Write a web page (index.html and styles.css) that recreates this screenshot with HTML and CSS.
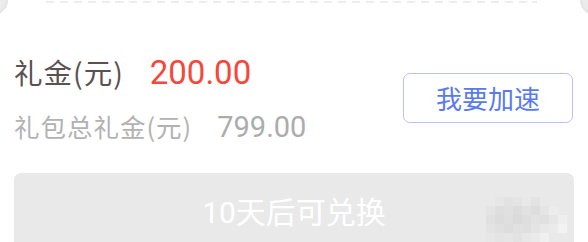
FILE: index.html
```html
<!DOCTYPE html>
<html lang="zh-CN">
<head>
<meta charset="utf-8">
<link rel="stylesheet" href="styles.css">
</head>
<body>
<div class="card">
  <span class="notch notch-left"></span>
  <span class="notch notch-right"></span>
  <div class="dash"></div>
  <div class="info">
    <div class="amounts">
      <div class="row row-main">
        <span class="label">礼金(元)</span>
        <span class="value">200.00</span>
      </div>
      <div class="row row-sub">
        <span class="label">礼包总礼金(元)</span>
        <span class="value">799.00</span>
      </div>
    </div>
    <button class="speed">我要加速</button>
  </div>
  <div class="exchange">10天后可兑换</div>
  <div class="mosaic">
    <i style="left:9px;top:0;background:#e6e6e6"></i>
    <i style="left:18px;top:0;background:#e2e2e2"></i>
    <i style="left:27px;top:0;background:#e4e4e4"></i>
    <i style="left:36px;top:0;background:#e8e8e8"></i>
    <i style="left:45px;top:0;background:#e3e3e3"></i>
    <i style="left:54px;top:0;background:#e9e9e9"></i>
    <i style="left:0;top:9px;background:#e4e4e4"></i>
    <i style="left:9px;top:9px;background:#dedede"></i>
    <i style="left:18px;top:9px;background:#e0e0e0"></i>
    <i style="left:27px;top:9px;background:#dcdcdc"></i>
    <i style="left:36px;top:9px;background:#e1e1e1"></i>
    <i style="left:45px;top:9px;background:#dddddd"></i>
    <i style="left:54px;top:9px;background:#e5e5e5"></i>
    <i style="left:63px;top:9px;background:#ececec"></i>
    <i style="left:0;top:18px;background:#e0e0e0"></i>
    <i style="left:9px;top:18px;background:#dcdcdc"></i>
    <i style="left:18px;top:18px;background:#dfdfdf"></i>
    <i style="left:27px;top:18px;background:#dadada"></i>
    <i style="left:36px;top:18px;background:#dedede"></i>
    <i style="left:45px;top:18px;background:#e2e2e2"></i>
    <i style="left:54px;top:18px;background:#e0e0e0"></i>
    <i style="left:63px;top:18px;background:#e6e6e6"></i>
    <i style="left:72px;top:18px;background:#eeeeee"></i>
    <i style="left:0;top:27px;background:#e3e3e3"></i>
    <i style="left:9px;top:27px;background:#e0e0e0"></i>
    <i style="left:18px;top:27px;background:#dddddd"></i>
    <i style="left:27px;top:27px;background:#e1e1e1"></i>
    <i style="left:36px;top:27px;background:#dfdfdf"></i>
    <i style="left:45px;top:27px;background:#e4e4e4"></i>
    <i style="left:54px;top:27px;background:#e8e8e8"></i>
    <i style="left:63px;top:27px;background:#ebebeb"></i>
    <i style="left:72px;top:27px;background:#f2f2f2"></i>
    <i style="left:0;top:36px;background:#e7e7e7"></i>
    <i style="left:9px;top:36px;background:#e4e4e4"></i>
    <i style="left:18px;top:36px;background:#e6e6e6"></i>
    <i style="left:27px;top:36px;background:#e2e2e2"></i>
    <i style="left:36px;top:36px;background:#e7e7e7"></i>
    <i style="left:45px;top:36px;background:#eaeaea"></i>
    <i style="left:54px;top:36px;background:#f0f0f0"></i>
  </div>
</div>
</body>
</html>
```

FILE: styles.css
```css
html, body {
  margin: 0;
  padding: 0;
  background: #ffffff;
}

.card {
  position: relative;
  width: 588px;
  height: 242px;
  overflow: hidden;
  font-family: Roboto, "Noto Sans CJK SC", sans-serif;
}

.notch {
  position: absolute;
  width: 30px;
  height: 30px;
  border-radius: 50%;
  background: #ececec;
  box-shadow: inset 0 0 4px rgba(0, 0, 0, 0.08);
}

.notch-left {
  left: -22px;
  top: -15px;
}

.notch-right {
  right: -22px;
  top: -15px;
}

.dash {
  height: 2px;
  margin: 1px 51px 0 46px;
  background: repeating-linear-gradient(90deg, #ededed 0, #ededed 8px, transparent 8px, transparent 13.9px);
}

.info {
  display: flex;
  align-items: flex-start;
  justify-content: space-between;
  padding: 0 15px 0 14px;
  margin-top: 49px;
}

.amounts {
  display: flex;
  flex-direction: column;
}

.row {
  display: flex;
  align-items: baseline;
}

.row-main {
  height: 40px;
  line-height: 40px;
}

.row-main .label {
  font-size: 28.5px;
  color: #5b5151;
  letter-spacing: 1px;
  font-family: "Noto Sans CJK SC", sans-serif;
}

.row-main .value {
  font-size: 33px;
  color: #f5473a;
  margin-left: 26px;
}

.row-sub {
  margin-top: 17px;
  height: 34px;
  line-height: 34px;
}

.row-sub .label {
  font-size: 25.5px;
  color: #b2b2b2;
  letter-spacing: 1px;
  font-family: "Noto Sans CJK SC", sans-serif;
}

.row-sub .value {
  font-size: 29px;
  color: #acacac;
  margin-left: 25px;
}

.speed {
  margin-top: 21px;
  width: 170px;
  height: 50px;
  box-sizing: border-box;
  border: 1px solid #b4c3fb;
  border-radius: 7px;
  background: #ffffff;
  color: #5a7af0;
  font-family: "Noto Sans CJK SC", sans-serif;
  font-size: 26px;
  padding: 0;
  line-height: 48px;
}

.exchange {
  margin: 30px 14px 0 14px;
  height: 90px;
  border-radius: 7px;
  background: #e9e9e9;
  color: #ffffff;
  font-size: 30px;
  font-family: Roboto, "Noto Sans CJK SC", sans-serif;
  text-align: center;
  padding-top: 20px;
  box-sizing: border-box;
  line-height: 40px;
}

.mosaic {
  position: absolute;
  left: 486px;
  top: 197px;
  width: 102px;
  height: 45px;
}

.mosaic i {
  position: absolute;
  width: 9px;
  height: 9px;
}
```
